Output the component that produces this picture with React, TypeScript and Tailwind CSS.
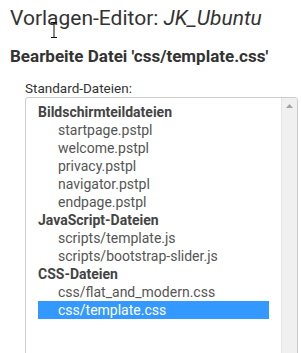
import React from 'react';

const GROUPS: { label: string; files: string[] }[] = [
  {
    label: 'Bildschirmteildateien',
    files: ['startpage.pstpl', 'welcome.pstpl', 'privacy.pstpl', 'navigator.pstpl', 'endpage.pstpl'],
  },
  { label: 'JavaScript-Dateien', files: ['scripts/template.js', 'scripts/bootstrap-slider.js'] },
  { label: 'CSS-Dateien', files: ['css/flat_and_modern.css', 'css/template.css'] },
];

const SELECTED = 'css/template.css';

export default function App() {
  return (
    <div className="relative w-[301px] h-[353px] overflow-hidden bg-white text-[#333]" style={{ fontFamily: 'Roboto, "Open Sans", sans-serif' }}>
      <h1 className="pl-[10px] pt-[6px] text-[21px] leading-[24px] font-normal text-[#333]">
        Vorlagen-Editor: <i>JK_Ubuntu</i>
      </h1>
      <h2 className="pl-[10px] mt-[16px] text-[17px] leading-[20px] font-bold text-[#333]">
        Bearbeite Datei 'css/template.css'
      </h2>

      <div className="pl-[25px] mt-[14px]">
        <p className="text-[13.5px] leading-[16px] text-[#333]">Standard-Dateien:</p>
        <div className="mt-[1px] w-[273px] h-[270px] flex border border-[#ccc] rounded-[3px] overflow-hidden">
          <div className="flex-1 flex flex-col pt-[5px] px-[12px] text-[14px] leading-[18px]">
            {GROUPS.map((g) => (
              <React.Fragment key={g.label}>
                <div className="h-[18px] font-bold text-[#444]">{g.label}</div>
                {g.files.map((f) => (
                  <div
                    key={f}
                    className={
                      f === SELECTED
                        ? 'h-[18px] pl-[20px] bg-[#3399ff] text-white'
                        : 'h-[18px] pl-[20px] text-[#555]'
                    }
                  >
                    {f}
                  </div>
                ))}
              </React.Fragment>
            ))}
          </div>
          <div className="w-[16px] bg-[#f0f0f0] border-l border-[#e6e6e6] flex justify-center pt-[6px]">
            <svg width="7" height="4" viewBox="0 0 7 4">
              <path d="M0 4 L3.5 0 L7 4 Z" fill="#a3a3a3" />
            </svg>
          </div>
        </div>
      </div>

      {/* text cursor over the title */}
      <svg className="absolute left-[50px] top-[22px]" width="8" height="16" viewBox="0 0 8 16">
        <path d="M1 0.5 H7 M4 0.5 V15.5 M1 15.5 H7" stroke="#111" strokeWidth="1" fill="none" />
      </svg>
    </div>
  );
}
